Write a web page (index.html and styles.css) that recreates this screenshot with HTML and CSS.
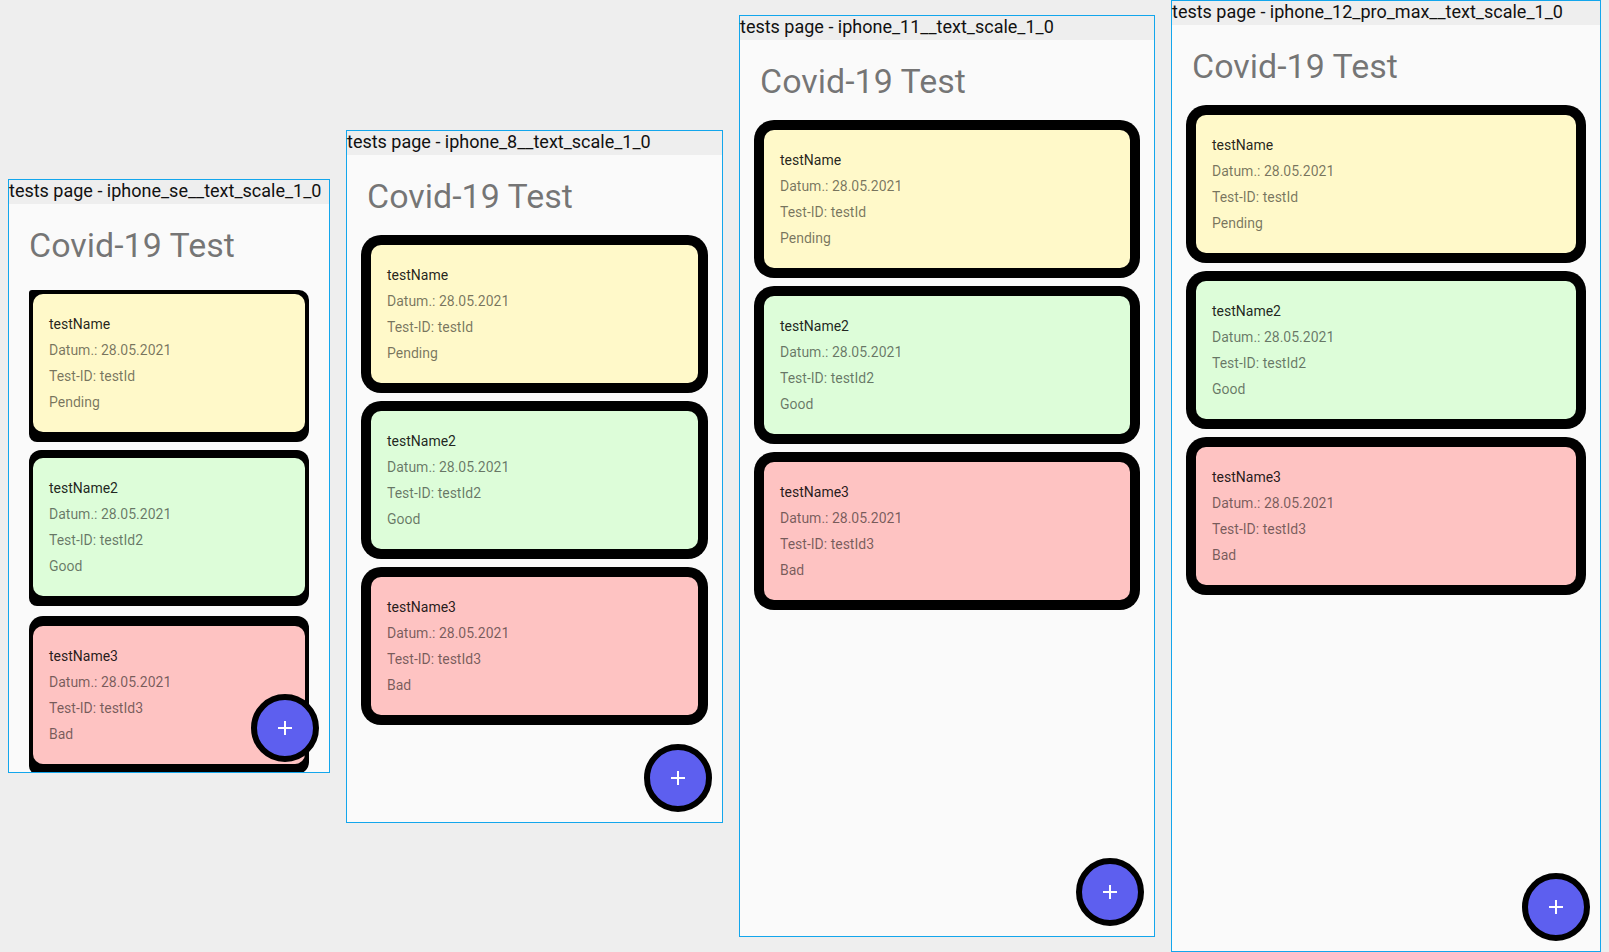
FILE: index.html
```html
<!DOCTYPE html>
<html lang="de">

<head>
    <meta charset="UTF-8" />
    <meta name="viewport" content="width=device-width, initial-scale=1.0" />
    <title>tests page</title>
    <link rel="stylesheet" href="styles.css">
</head>

<body>
    <div class="sheet">

        <div class="device device-se">
            <div class="device-label">tests page - iphone_se__text_scale_1_0</div>
            <div class="screen">
                <h1 class="title">Covid-19 Test</h1>
                <div class="test-list">
                    <div class="test-card pending">
                        <div class="test-body">
                            <div class="test-name">testName</div>
                            <div class="test-line">Datum.: 28.05.2021</div>
                            <div class="test-line">Test-ID: testId</div>
                            <div class="test-line">Pending</div>
                        </div>
                    </div>
                    <div class="test-card good">
                        <div class="test-body">
                            <div class="test-name">testName2</div>
                            <div class="test-line">Datum.: 28.05.2021</div>
                            <div class="test-line">Test-ID: testId2</div>
                            <div class="test-line">Good</div>
                        </div>
                    </div>
                    <div class="test-card bad">
                        <div class="test-body">
                            <div class="test-name">testName3</div>
                            <div class="test-line">Datum.: 28.05.2021</div>
                            <div class="test-line">Test-ID: testId3</div>
                            <div class="test-line">Bad</div>
                        </div>
                    </div>
                </div>
                <button class="fab"><svg viewBox="0 0 24 24"><path d="M19 13h-6v6h-2v-6H5v-2h6V5h2v6h6v2z" /></svg></button>
            </div>
        </div>

        <div class="device device-8">
            <div class="device-label">tests page - iphone_8__text_scale_1_0</div>
            <div class="screen">
                <h1 class="title">Covid-19 Test</h1>
                <div class="test-list">
                    <div class="test-card pending">
                        <div class="test-body">
                            <div class="test-name">testName</div>
                            <div class="test-line">Datum.: 28.05.2021</div>
                            <div class="test-line">Test-ID: testId</div>
                            <div class="test-line">Pending</div>
                        </div>
                    </div>
                    <div class="test-card good">
                        <div class="test-body">
                            <div class="test-name">testName2</div>
                            <div class="test-line">Datum.: 28.05.2021</div>
                            <div class="test-line">Test-ID: testId2</div>
                            <div class="test-line">Good</div>
                        </div>
                    </div>
                    <div class="test-card bad">
                        <div class="test-body">
                            <div class="test-name">testName3</div>
                            <div class="test-line">Datum.: 28.05.2021</div>
                            <div class="test-line">Test-ID: testId3</div>
                            <div class="test-line">Bad</div>
                        </div>
                    </div>
                </div>
                <button class="fab"><svg viewBox="0 0 24 24"><path d="M19 13h-6v6h-2v-6H5v-2h6V5h2v6h6v2z" /></svg></button>
            </div>
        </div>

        <div class="device device-11">
            <div class="device-label">tests page - iphone_11__text_scale_1_0</div>
            <div class="screen">
                <h1 class="title">Covid-19 Test</h1>
                <div class="test-list">
                    <div class="test-card pending">
                        <div class="test-body">
                            <div class="test-name">testName</div>
                            <div class="test-line">Datum.: 28.05.2021</div>
                            <div class="test-line">Test-ID: testId</div>
                            <div class="test-line">Pending</div>
                        </div>
                    </div>
                    <div class="test-card good">
                        <div class="test-body">
                            <div class="test-name">testName2</div>
                            <div class="test-line">Datum.: 28.05.2021</div>
                            <div class="test-line">Test-ID: testId2</div>
                            <div class="test-line">Good</div>
                        </div>
                    </div>
                    <div class="test-card bad">
                        <div class="test-body">
                            <div class="test-name">testName3</div>
                            <div class="test-line">Datum.: 28.05.2021</div>
                            <div class="test-line">Test-ID: testId3</div>
                            <div class="test-line">Bad</div>
                        </div>
                    </div>
                </div>
                <button class="fab"><svg viewBox="0 0 24 24"><path d="M19 13h-6v6h-2v-6H5v-2h6V5h2v6h6v2z" /></svg></button>
            </div>
        </div>

        <div class="device device-12">
            <div class="device-label">tests page - iphone_12_pro_max__text_scale_1_0</div>
            <div class="screen">
                <h1 class="title">Covid-19 Test</h1>
                <div class="test-list">
                    <div class="test-card pending">
                        <div class="test-body">
                            <div class="test-name">testName</div>
                            <div class="test-line">Datum.: 28.05.2021</div>
                            <div class="test-line">Test-ID: testId</div>
                            <div class="test-line">Pending</div>
                        </div>
                    </div>
                    <div class="test-card good">
                        <div class="test-body">
                            <div class="test-name">testName2</div>
                            <div class="test-line">Datum.: 28.05.2021</div>
                            <div class="test-line">Test-ID: testId2</div>
                            <div class="test-line">Good</div>
                        </div>
                    </div>
                    <div class="test-card bad">
                        <div class="test-body">
                            <div class="test-name">testName3</div>
                            <div class="test-line">Datum.: 28.05.2021</div>
                            <div class="test-line">Test-ID: testId3</div>
                            <div class="test-line">Bad</div>
                        </div>
                    </div>
                </div>
                <button class="fab"><svg viewBox="0 0 24 24"><path d="M19 13h-6v6h-2v-6H5v-2h6V5h2v6h6v2z" /></svg></button>
            </div>
        </div>

    </div>
</body>

</html>
```

FILE: styles.css
```css
body,
html {
    margin: 0;
    padding: 0;
    background: #eeeeee;
    font-family: Roboto, "Noto Sans", sans-serif;
}

.sheet {
    height: 952px;
    display: flex;
    align-items: center;
    overflow: hidden;
}

.device {
    margin: 0 8px;
    border: 1px solid #13a6ec;
    flex-shrink: 0;
}

.device-label {
    height: 24px;
    line-height: 21px;
    font-size: 18px;
    color: #111;
    background: #eeeeee;
    white-space: nowrap;
}

.screen {
    position: relative;
    overflow: hidden;
    background: #fafafa;
}

.device-se .screen {
    width: 320px;
    height: 568px;
}

.device-8 .screen {
    width: 375px;
    height: 667px;
}

.device-11 .screen {
    width: 414px;
    height: 896px;
}

.device-12 .screen {
    width: 428px;
    height: 926px;
}

.title {
    margin: 0;
    padding: 21px 20px 0;
    font-size: 34px;
    line-height: 40px;
    font-weight: 400;
    color: rgba(0, 0, 0, 0.54);
}

.test-list {
    display: flex;
    flex-direction: column;
    gap: 8px;
    padding: 19px 14px 0;
}

.test-card {
    background: #000;
    padding: 10px;
    border-radius: 20px;
}

.test-body {
    border-radius: 10px;
    padding: 20px 16px;
    font-size: 14px;
}

.pending .test-body {
    background: #fff9c9;
}

.good .test-body {
    background: #ddfdd9;
}

.bad .test-body {
    background: #fec3c2;
}

.test-name {
    line-height: 20px;
    color: rgba(0, 0, 0, 0.87);
}

.test-line {
    margin-top: 6px;
    line-height: 20px;
    color: rgba(0, 0, 0, 0.54);
}

/* the small screen draws its card frames a bit off */
.device-se .test-list {
    padding: 25px 20px 0;
}

.device-se .test-card {
    padding: 4px 4px 10px;
    border-radius: 3px 10px 12px 8px;
}

.device-se .test-card.good {
    padding-top: 8px;
    border-radius: 12px 12px 12px 8px;
}

.device-se .test-card.bad {
    margin-top: 2px;
    padding-top: 10px;
    border-radius: 14px 12px 12px 8px;
}

.fab {
    position: absolute;
    right: 10px;
    bottom: 10px;
    width: 68px;
    height: 68px;
    padding: 0;
    border: 6px solid #000;
    border-radius: 50%;
    background: #5d5fef;
    display: flex;
    align-items: center;
    justify-content: center;
    cursor: pointer;
}

.fab svg {
    width: 24px;
    height: 24px;
    fill: #fff;
}
```
